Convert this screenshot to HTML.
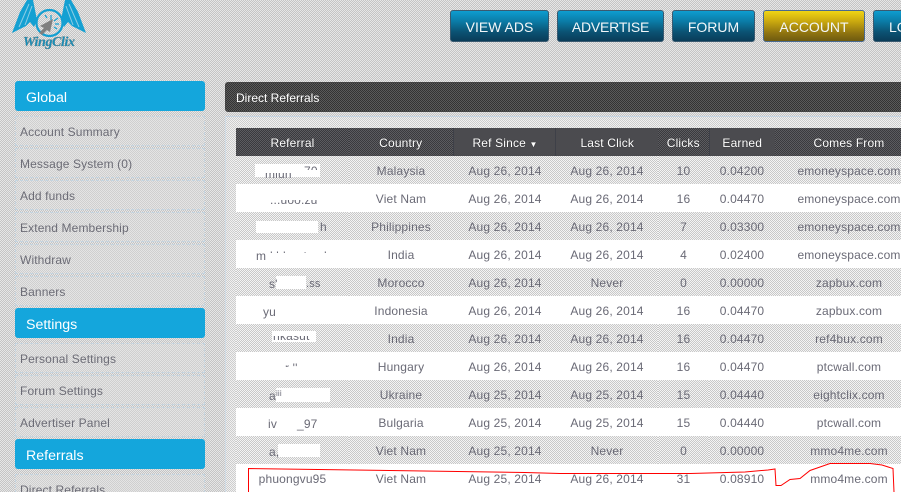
<!DOCTYPE html>
<html style="width:901px;height:492px;overflow:hidden"><head><meta charset="utf-8">
<style>
html,body{margin:0;padding:0}
body{width:901px;height:492px;overflow:hidden;position:relative;font-family:"Liberation Sans",Arial,sans-serif;
background:repeating-conic-gradient(#c4c4c4 0 25%,#e6e6e6 0 50%) 0 0/2px 2px;}
.a{position:absolute}
.btn{position:absolute;top:10px;height:32px;box-sizing:border-box;border:1px solid #3a5a70;border-radius:3px;color:#f2f6f8;font-size:14px;line-height:33px;text-align:center;white-space:nowrap;overflow:hidden;
background:linear-gradient(#0e9dd0 0,#0b7ba6 35%,#0b5273 70%,#0a3c58 100%)}
.btn.y{background:linear-gradient(#f0d414 0,#c9a80f 35%,#8d7210 75%,#6e5a10 100%);border-color:#4a6a90}
.hd{position:absolute;left:15px;width:190px;height:30px;border-radius:3px;background:#14a6dc;color:#fff;font-size:14.2px;line-height:34px;padding-left:11px;box-sizing:border-box}
.it{position:absolute;left:15px;width:190px;height:30px;box-sizing:border-box;border:1px dashed #c4d4e0;color:#6c6c76;font-size:12px;line-height:31px;padding-left:4px;letter-spacing:.12px;
background:repeating-conic-gradient(#cfcfcf 0 25%,#e4e4e4 0 50%) 0 0/2px 2px}
.panel{position:absolute;left:225px;top:82px;width:680px;height:30px;background:repeating-conic-gradient(#333 0 25%,#5a5a5a 0 50%) 0 0/2px 2px;border:1px solid #444;border-radius:3px;box-sizing:border-box;color:#fff;font-size:12px;line-height:30px;padding-left:10px}
.body{position:absolute;left:225px;top:116px;width:680px;height:376px;border-top:1px solid #c6d4e2;border-left:1px solid #d0dce6;box-sizing:border-box;background:repeating-conic-gradient(#cdcdcd 0 25%,#f0f0f0 0 50%) 0 0/2px 2px}
table{position:absolute;left:236px;top:128px;border-collapse:collapse;table-layout:fixed;width:685px;font-size:12px;color:#6a6a76;letter-spacing:.16px}
th{height:28px;padding:2px 0 0;box-sizing:border-box;color:#fff;font-weight:normal;background:repeating-conic-gradient(#3a3a3e 0 25%,#5c5c60 0 50%) 0 0/2px 2px;border-right:1px solid #3e4048;text-shadow:0 0 1px #222}
th.n{border-right:none}
td{height:28px;padding:2px 0 0;box-sizing:border-box;text-align:center;white-space:nowrap;overflow:hidden}
td:nth-child(3),th:nth-child(3){padding-left:2px}
td:nth-child(4),th:nth-child(4){padding-left:1px}
td:nth-child(7),th:nth-child(7){padding-left:2px}
tr.g td{background:repeating-conic-gradient(#c8c8c8 0 25%,#f4f4f4 0 50%) 0 0/2px 2px}
tr.w td{background:#fff}
.m{position:absolute;background:#fff}
.s{position:absolute;font-size:12px;color:#6a6a76;line-height:14px;white-space:nowrap;letter-spacing:.16px}
</style></head>
<body>
<svg class="a" style="left:0;top:0" width="100" height="50" viewBox="0 0 100 50">
<g fill="#14a0d2">
<path d="M12 33 L20 12 L27 0 L33 0 L37 20 L34 27 L30 22 L26 26 L20 29 Z"/>
<path d="M86 33 L78 12 L71 0 L65 0 L61 20 L64 27 L68 22 L72 26 L78 29 Z"/>
</g>
<g stroke="#8ccde6" stroke-width="1" fill="none">
<path d="M19 27 L29 4"/><path d="M25 25 L32 6"/><path d="M79 27 L69 4"/><path d="M73 25 L66 6"/>
</g>
<circle cx="49.500" cy="23" r="13" fill="none" stroke="#14a0d2" stroke-width="2.2"/>
<path d="M53 19 L40 26 L44 28 L39 33 L42 35 L47 30 L50 32 Z" fill="#7f7f7f"/>
<path d="M51 20v-5M54 21l4-3M55 24h4M47 18l-2-3M54 27l3 2" stroke="#14a0d2" stroke-width="1.2"/>
<text x="23" y="46" font-family="Liberation Serif,serif" font-style="italic" font-weight="bold" font-size="14" fill="#1590bc" stroke="#6a8088" stroke-width=".35" textLength="52">WingClix</text>
</svg>

<div class="btn" style="left:450px;width:99px">VIEW ADS</div>
<div class="btn" style="left:557px;width:107px;letter-spacing:-.2px">ADVERTISE</div>
<div class="btn" style="left:672px;width:83px">FORUM</div>
<div class="btn y" style="left:763px;width:102px">ACCOUNT</div>
<div class="btn" style="left:873px;width:60px;text-align:left;padding-left:15px">LOGOUT</div>

<div class="hd" style="top:81px">Global</div>
<div class="it" style="top:116px">Account Summary</div>
<div class="it" style="top:148px">Message System (0)</div>
<div class="it" style="top:180px">Add funds</div>
<div class="it" style="top:212px">Extend Membership</div>
<div class="it" style="top:244px">Withdraw</div>
<div class="it" style="top:276px">Banners</div>
<div class="hd" style="top:308px">Settings</div>
<div class="it" style="top:343px">Personal Settings</div>
<div class="it" style="top:375px">Forum Settings</div>
<div class="it" style="top:407px">Advertiser Panel</div>
<div class="hd" style="top:439px">Referrals</div>
<div class="it" style="top:474px">Direct Referrals</div>

<div class="panel">Direct Referrals</div>
<div class="body"></div>

<table>
<colgroup><col style="width:113px"><col style="width:104px"><col style="width:102px"><col style="width:103px"><col style="width:51px"><col style="width:66px"><col style="width:146px"></colgroup>
<tr><th class="n">Referral</th><th>Country</th><th>Ref Since <span style="font-size:8px">▼</span></th><th class="n">Last Click</th><th>Clicks</th><th class="n">Earned</th><th class="n">Comes From</th></tr>
<tr class="g"><td></td><td>Malaysia</td><td>Aug 26, 2014</td><td>Aug 26, 2014</td><td>10</td><td>0.04200</td><td>emoneyspace.com</td></tr>
<tr class="w"><td></td><td>Viet Nam</td><td>Aug 26, 2014</td><td>Aug 26, 2014</td><td>16</td><td>0.04470</td><td>emoneyspace.com</td></tr>
<tr class="g"><td></td><td>Philippines</td><td>Aug 26, 2014</td><td>Aug 26, 2014</td><td>7</td><td>0.03300</td><td>emoneyspace.com</td></tr>
<tr class="w"><td></td><td>India</td><td>Aug 26, 2014</td><td>Aug 26, 2014</td><td>4</td><td>0.02400</td><td>emoneyspace.com</td></tr>
<tr class="g"><td></td><td>Morocco</td><td>Aug 26, 2014</td><td>Never</td><td>0</td><td>0.00000</td><td>zapbux.com</td></tr>
<tr class="w"><td></td><td>Indonesia</td><td>Aug 26, 2014</td><td>Aug 26, 2014</td><td>16</td><td>0.04470</td><td>zapbux.com</td></tr>
<tr class="g"><td></td><td>India</td><td>Aug 26, 2014</td><td>Aug 26, 2014</td><td>16</td><td>0.04470</td><td>ref4bux.com</td></tr>
<tr class="w"><td></td><td>Hungary</td><td>Aug 26, 2014</td><td>Aug 26, 2014</td><td>16</td><td>0.04470</td><td>ptcwall.com</td></tr>
<tr class="g"><td></td><td>Ukraine</td><td>Aug 25, 2014</td><td>Aug 25, 2014</td><td>15</td><td>0.04440</td><td>eightclix.com</td></tr>
<tr class="w"><td></td><td>Bulgaria</td><td>Aug 25, 2014</td><td>Aug 25, 2014</td><td>15</td><td>0.04440</td><td>ptcwall.com</td></tr>
<tr class="g"><td></td><td>Viet Nam</td><td>Aug 25, 2014</td><td>Never</td><td>0</td><td>0.00000</td><td>mmo4me.com</td></tr>
<tr class="w"><td>phuongvu95</td><td>Viet Nam</td><td>Aug 25, 2014</td><td>Aug 26, 2014</td><td>31</td><td>0.08910</td><td>mmo4me.com</td></tr>
</table>

<div class="m" style="left:255px;top:164px;width:65px;height:13px"></div>
<div class="m" style="left:256px;top:221px;width:62px;height:12px"></div>
<div class="m" style="left:276px;top:276px;width:30px;height:13px"></div>
<div class="m" style="left:272px;top:331px;width:44px;height:11px"></div>
<div class="m" style="left:276px;top:388px;width:54px;height:14px"></div>
<div class="m" style="left:278px;top:444px;width:42px;height:13px"></div>

<div class="s" style="left:265px;top:167px;clip-path:inset(6px 0 0 0)">mlun</div>
<div class="s" style="left:304px;top:164px;clip-path:inset(0 0 8px 0)">70</div>
<div class="s" style="left:270px;top:193px;clip-path:inset(7px 0 0 0)">...uoo.zu</div>
<div class="s" style="left:284px;top:220px;clip-path:inset(0 0 11px 0)">tttt</div>
<div class="s" style="left:320px;top:220px">h</div>
<div class="s" style="left:256px;top:249px">m</div>
<div class="s" style="left:270px;top:249px;clip-path:inset(0 0 10px 0)">khbaatvada</div>
<div class="s" style="left:269px;top:277px">s'</div>
<div class="s" style="left:306px;top:277px;font-size:11px">.ss</div>
<div class="s" style="left:263px;top:305px">yu</div>
<div class="s" style="left:290px;top:305px;clip-path:inset(0 0 12px 0)">l</div>
<div class="s" style="left:273px;top:329px;clip-path:inset(7px 0 0 0)">rikasut</div>
<div class="s" style="left:285px;top:361px;clip-path:inset(0 0 8px 0)">r ''</div>
<div class="s" style="left:269px;top:389px">a</div>
<div class="s" style="left:276px;top:387px;font-size:8px">iii</div>
<div class="s" style="left:268px;top:417px">iv</div>
<div class="s" style="left:297px;top:417px">_97</div>
<div class="s" style="left:269px;top:445px">a,</div>

<svg class="a" style="left:0;top:0" width="901" height="492" viewBox="0 0 901 492">
<path d="M248.500 492 V468.500 L525 472.500 L560 473.500 L690 473.500 L745 472 L768 470 L775 469 L776 485.500 L781 485.500 L790 479.500 L800 478.500 L810 470.500 L830 463.500 L870 463.500 L882 465 L893 468.500 L894 492" fill="none" stroke="#f00" stroke-width="1"/>
</svg>
</body></html>
